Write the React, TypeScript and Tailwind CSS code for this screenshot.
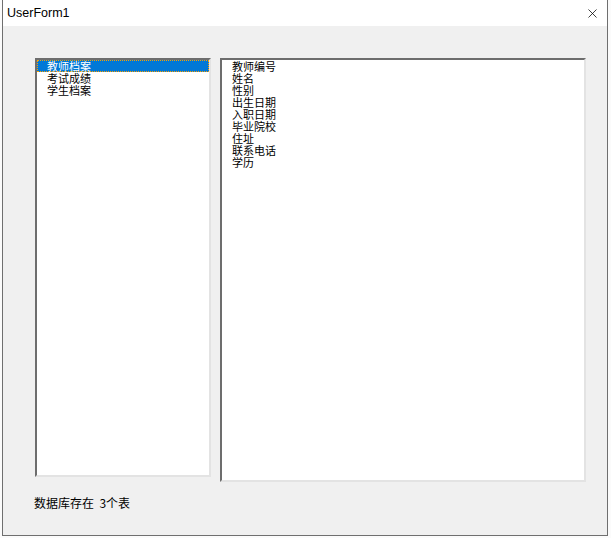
import { X } from "lucide-react";

const tables = ["教师档案", "考试成绩", "学生档案"];
const fields = ["教师编号", "姓名", "性别", "出生日期", "入职日期", "毕业院校", "住址", "联系电话", "学历"];

const cjk = { fontFamily: '"Noto Sans CJK SC", "Liberation Sans", sans-serif' };

function ListBox({ items, selected, className }: { items: string[]; selected?: number; className: string }) {
  return (
    <div className={`border-t-2 border-l-2 border-t-[#6d6d6d] border-l-[#6d6d6d] border-r-2 border-b-2 border-r-[#e3e3e3] border-b-[#e3e3e3] bg-white ${className}`}>
      <div className="flex flex-col text-[11px] leading-[12px] text-black" style={cjk}>
        {items.map((t, i) =>
          i === selected ? (
            <div key={t} className="h-[12px] bg-[#0078d7] pl-[10px] text-white outline-1 outline-dotted outline-[#f7a000] -outline-offset-1">
              {t}
            </div>
          ) : (
            <div key={t} className="h-[12px] pl-[10px]">
              {t}
            </div>
          )
        )}
      </div>
    </div>
  );
}

export default function App() {
  return (
    <div className="h-[538px] w-[611px] bg-[#fbfbfb]">
      <div className="ml-[2px] flex h-[536px] w-[606px] flex-col border-x border-b border-[#6f6f6f] bg-[#f0f0f0]">
        {/* title bar */}
        <div className="flex h-[26px] items-center justify-between bg-white pl-[4px] pr-[7px]">
          <span className="text-[12.5px] text-black" style={{ fontFamily: '"Liberation Sans", Arial, sans-serif' }}>
            UserForm1
          </span>
          <X className="h-[15px] w-[15px] text-black" strokeWidth={1.2} />
        </div>

        {/* body */}
        <div className="flex gap-[9px] pl-[32px] pt-[32px]">
          <ListBox items={tables} selected={0} className="h-[419px] w-[176px]" />
          <ListBox items={fields} className="h-[424px] w-[366px]" />
        </div>

        <div className="pl-[31px] pt-[14px] text-[12px] leading-[14px] text-black" style={cjk}>
          数据库存在&nbsp;&nbsp;3个表
        </div>
      </div>
    </div>
  );
}
